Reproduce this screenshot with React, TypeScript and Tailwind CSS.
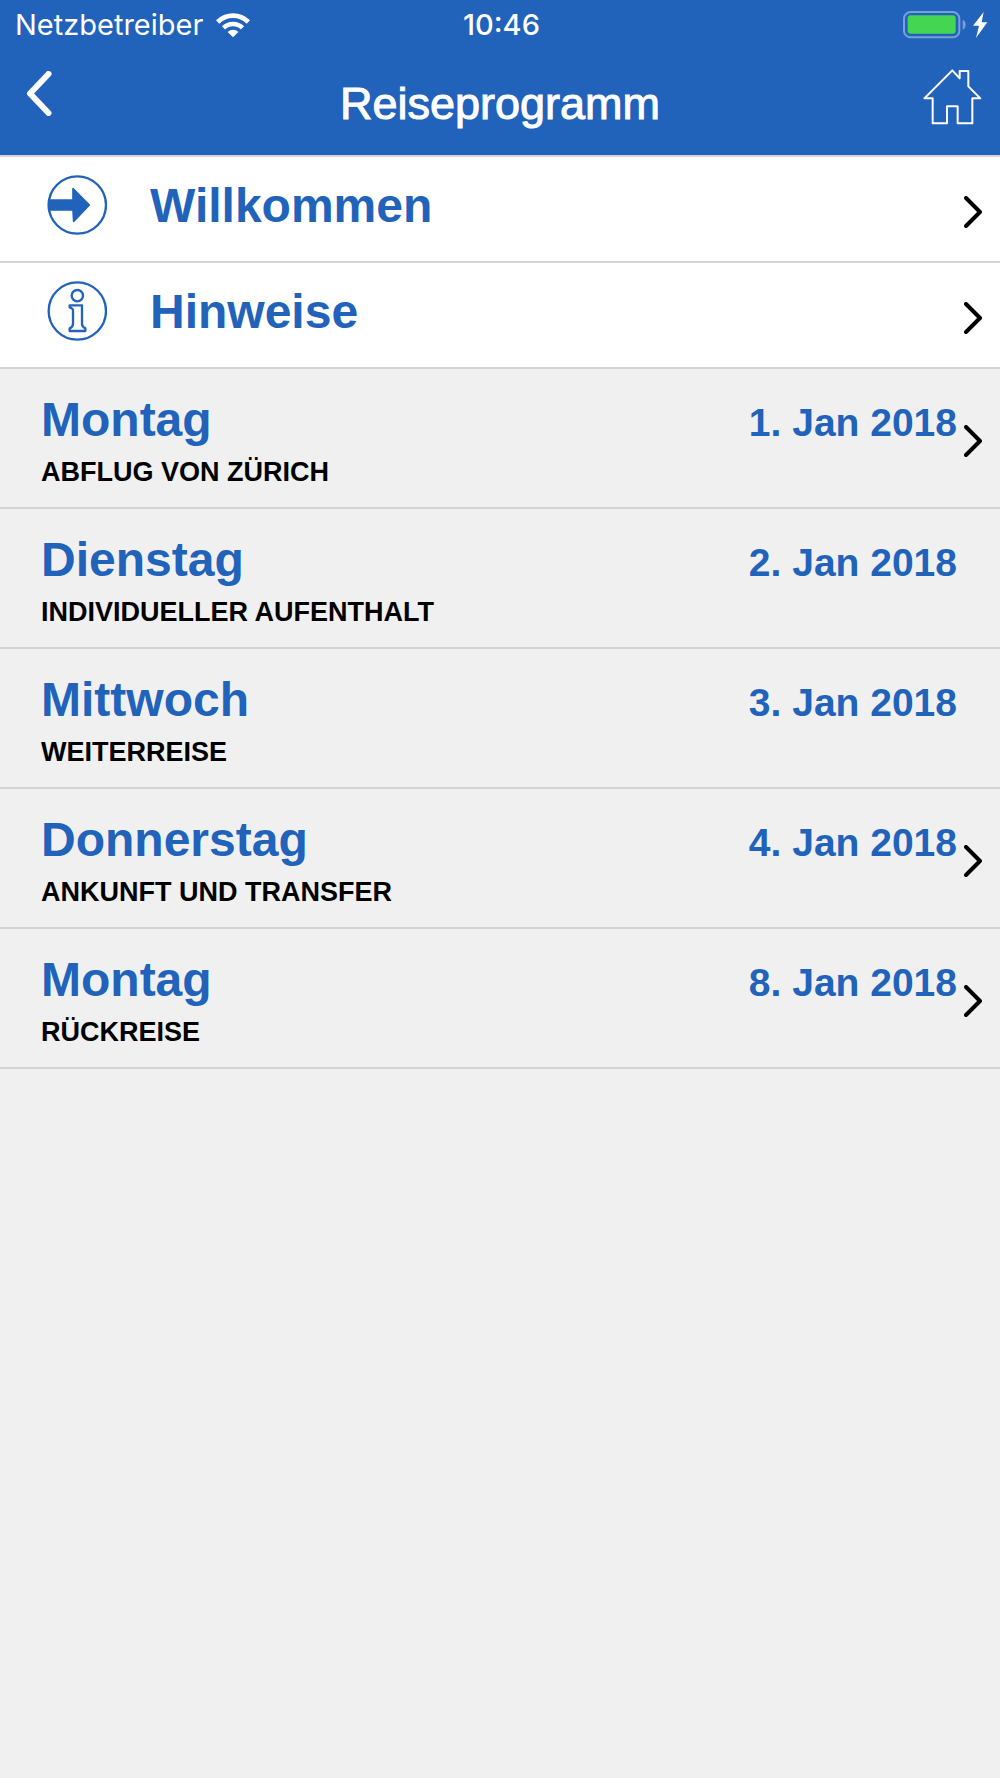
import type { ReactNode } from "react";

interface Day {
  weekday: string;
  date: string;
  iso: string;
  title: string;
  hasDetails: boolean;
}

const DAYS: Day[] = [
  { weekday: "Montag", date: "1. Jan 2018", iso: "2018-01-01", title: "ABFLUG VON ZÜRICH", hasDetails: true },
  { weekday: "Dienstag", date: "2. Jan 2018", iso: "2018-01-02", title: "INDIVIDUELLER AUFENTHALT", hasDetails: false },
  { weekday: "Mittwoch", date: "3. Jan 2018", iso: "2018-01-03", title: "WEITERREISE", hasDetails: false },
  { weekday: "Donnerstag", date: "4. Jan 2018", iso: "2018-01-04", title: "ANKUNFT UND TRANSFER", hasDetails: true },
  { weekday: "Montag", date: "8. Jan 2018", iso: "2018-01-08", title: "RÜCKREISE", hasDetails: true },
];

function WifiIcon() {
  return (
    <svg viewBox="0 0 108 81" className="w-9 h-[27px]" fill="none" stroke="white" strokeWidth="14" aria-hidden="true">
      <path d="M8 30a65 65 0 0 1 92 0" />
      <path d="M25.7 47.7a40 40 0 0 1 56.6 0" />
      <path d="M54 76 37.7 59.7a23 23 0 0 1 32.6 0Z" fill="white" stroke="none" />
    </svg>
  );
}

function BatteryIcon() {
  return (
    <svg viewBox="0 0 255 84" className="w-[85px] h-7" aria-hidden="true">
      <rect x="3" y="3" width="166" height="76" rx="20" fill="none" stroke="white" strokeOpacity="0.4" strokeWidth="6" />
      <rect x="14" y="13" width="144" height="55" rx="9" fill="#44d652" />
      <path d="M179 26q9 4 9 15t-9 15Z" fill="white" fillOpacity="0.4" />
      <path d="M242 3 210 44h18l-9 37 34-47h-17Z" fill="white" />
    </svg>
  );
}

function BackIcon() {
  return (
    <svg viewBox="0 0 26 45" className="w-[26px] h-[45px]" fill="none" stroke="white" strokeWidth="6" strokeLinecap="round" strokeLinejoin="round" aria-hidden="true">
      <path d="M22.5 3 4 22.5 22.5 42" />
    </svg>
  );
}

function HomeIcon() {
  return (
    <svg viewBox="0 0 177 171" className="w-[59px] h-[57px]" fill="none" stroke="white" strokeWidth="6" strokeLinejoin="round" aria-hidden="true">
      <path d="M88 7 110 31V9H136V55L172 91H148V166H104V115H72V166H29V91H4Z" />
    </svg>
  );
}

function ArrowIcon() {
  return (
    <svg viewBox="0 0 180 180" className="w-15 h-15 shrink-0" aria-hidden="true">
      <circle cx="91" cy="90" r="86" fill="none" stroke="#2162bb" strokeWidth="7" />
      <path d="M5 75H78V41L127 90 80 139 78 105H5Z" fill="#2162bb" stroke="#2162bb" strokeWidth="5" strokeLinejoin="round" />
    </svg>
  );
}

function InfoIcon() {
  return (
    <svg viewBox="0 0 180 180" className="w-15 h-15 shrink-0" fill="none" stroke="#2162bb" strokeWidth="7" strokeLinejoin="round" aria-hidden="true">
      <circle cx="91" cy="90" r="86" />
      <circle cx="91" cy="44" r="17" />
      <path d="M68 73h37v55q0 9 10 14v8H68v-8q10-4 10-14V88q0-6-10-9Z" />
    </svg>
  );
}

function Chevron() {
  return (
    <svg viewBox="0 0 18 32" className="w-[18px] h-8 mt-1.5 shrink-0" fill="none" stroke="black" strokeWidth="4" strokeLinecap="round" strokeLinejoin="round" aria-hidden="true">
      <path d="m2 2 14 14L2 30" />
    </svg>
  );
}

function InfoRow({ icon, label }: { icon: ReactNode; label: string }) {
  return (
    <li className="border-b-2 border-[#d3d3d3] bg-white">
      <button type="button" className="flex h-[104px] w-full items-center pr-[18px] pl-[47px] text-left">
        <span className="flex grow items-center gap-[43px] pb-2">
          {icon}
          <span className="pt-0.5 text-[48px] leading-[56px] font-bold text-[#2162bb]">{label}</span>
        </span>
        <Chevron />
      </button>
    </li>
  );
}

function DayRow({ day }: { day: Day }) {
  const content = (
    <>
      <span className="flex grow flex-col gap-2 pt-1">
        <span className="flex items-baseline justify-between font-bold text-[#2162bb]">
          <span className="text-[48px] leading-[56px]">{day.weekday}</span>
          <time dateTime={day.iso} className="text-[39px] leading-[44px]">
            {day.date}
          </time>
        </span>
        <span className="text-[27px] leading-8 font-bold text-black">{day.title}</span>
      </span>
      <span className="flex w-[18px] shrink-0">{day.hasDetails && <Chevron />}</span>
    </>
  );

  return (
    <li className="border-b-2 border-[#d3d3d3]">
      {day.hasDetails ? (
        <button type="button" className="flex h-[138px] w-full items-center gap-[7px] pr-[18px] pl-[41px] text-left">
          {content}
        </button>
      ) : (
        <div className="flex h-[138px] items-center gap-[7px] pr-[18px] pl-[41px]">{content}</div>
      )}
    </li>
  );
}

export default function App() {
  return (
    <div className="min-h-screen bg-[#f0f0f0] font-['Liberation_Sans',Arial,sans-serif]">
      <header className="border-b-2 border-[#d3d3d3] bg-[#2162bb] text-white">
        {/* Status bar */}
        <div className="grid h-[50px] grid-cols-[1fr_auto_1fr] items-center pr-3 pl-[15px] font-[Inter,sans-serif] text-[29px] leading-10">
          <div className="flex items-center gap-3">
            <span>Netzbetreiber</span>
            <WifiIcon />
          </div>
          <span className="font-medium">10:46</span>
          <div className="flex justify-end">
            <BatteryIcon />
          </div>
        </div>

        {/* Navigation */}
        <div className="grid h-[105px] grid-cols-[1fr_auto_1fr] items-start px-[18px] pt-[18px]">
          <button type="button" aria-label="Zurück" className="mt-[3px] ml-2 justify-self-start">
            <BackIcon />
          </button>
          <h1 className="mt-2.5 text-[45px] leading-[52px] [-webkit-text-stroke:1px_white]">Reiseprogramm</h1>
          <button type="button" aria-label="Startseite" className="justify-self-end">
            <HomeIcon />
          </button>
        </div>
      </header>

      <main>
        <ul>
          <InfoRow icon={<ArrowIcon />} label="Willkommen" />
          <InfoRow icon={<InfoIcon />} label="Hinweise" />
          {DAYS.map((day) => (
            <DayRow key={day.iso} day={day} />
          ))}
        </ul>
      </main>
    </div>
  );
}
